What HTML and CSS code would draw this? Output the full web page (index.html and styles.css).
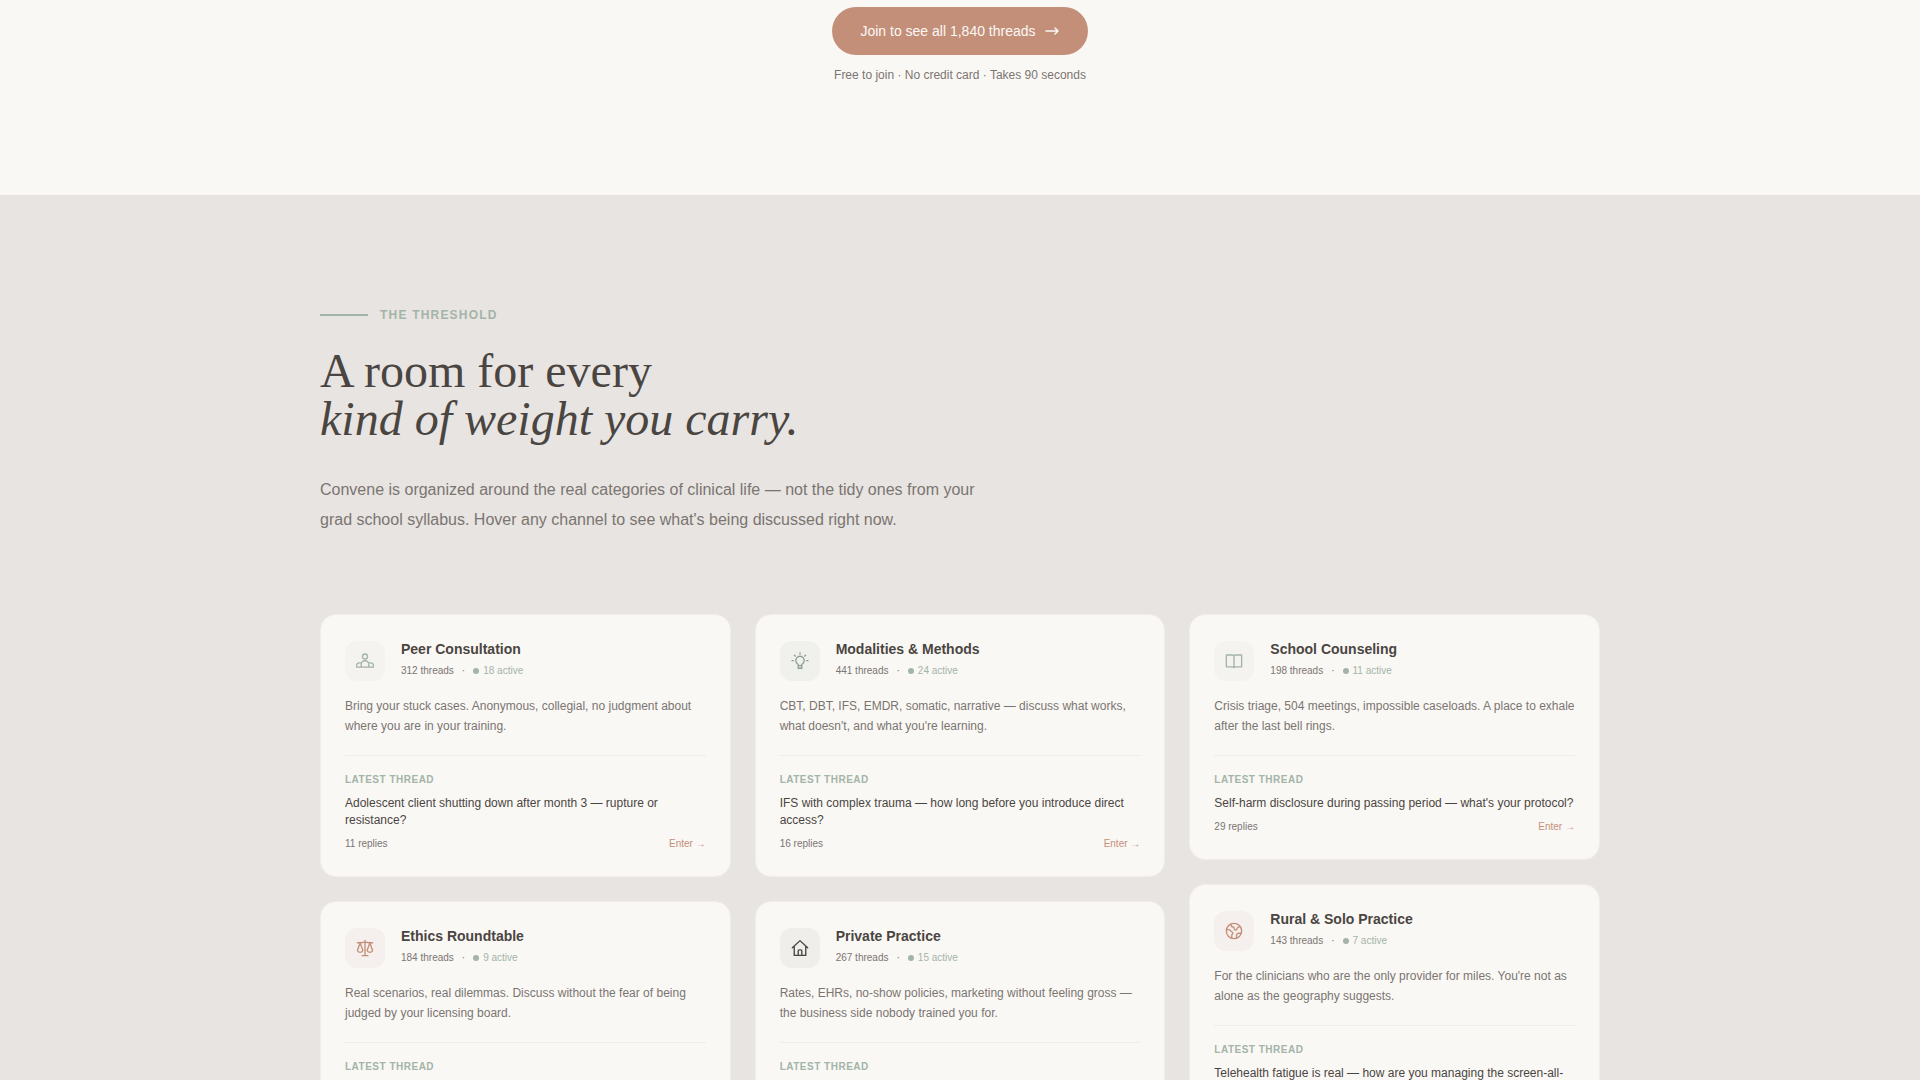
FILE: index.html
```html
<!DOCTYPE html>
<html lang="en">
<head>
    <meta charset="UTF-8">
    <meta name="viewport" content="width=device-width, initial-scale=1">
    <title>Convene</title>
    <link rel="stylesheet" href="styles.css">
</head>
<body>
<section class="join">
    <a href="#join" class="join-btn">
        Join to see all 1,840 threads
        <svg width="16" height="16" viewBox="0 0 16 16"><path d="M2 8h12M11 5l3 3-3 3"/></svg>
    </a>
    <p class="join-note">Free to join · No credit card · Takes 90 seconds</p>
</section>

<section class="threshold">
    <div class="container">
        <p class="kicker">The Threshold</p>
        <h2>A room for every<br><em>kind of weight you carry.</em></h2>
        <p class="intro">Convene is organized around the real categories of clinical life — not the tidy ones from your grad school syllabus. Hover any channel to see what's being discussed right now.</p>

        <div class="channels">
            <div class="column">
                <article class="card">
                    <header>
                        <span class="icon sage">
                            <svg viewBox="0 0 20 20"><circle cx="10" cy="5" r="2.8"/><path d="M5.800 16.800v-2.900a4.200 4.200 0 0 1 8.400 0v2.900M6 12H3.600A3 3 0 0 0 .6 15v1.800h18.800V15a3 3 0 0 0-3-3H14"/></svg>
                        </span>
                        <div>
                            <h3>Peer Consultation</h3>
                            <p class="meta">312 threads <i>·</i> <span class="active">18 active</span></p>
                        </div>
                    </header>
                    <p class="desc">Bring your stuck cases. Anonymous, collegial, no judgment about where you are in your training.</p>
                    <div class="latest">
                        <h4>Latest thread</h4>
                        <p class="thread">Adolescent client shutting down after month 3 — rupture or resistance?</p>
                        <p class="foot"><span>11 replies</span><a href="#peer">Enter →</a></p>
                    </div>
                </article>
                <article class="card cut">
                    <header>
                        <span class="icon clay">
                            <svg viewBox="0 0 20 20"><path d="M10 1.500v17M6.800 18.500h6.400M1.500 4.200h3.500L10 3.400l5 .8h3.500M4.600 4.500l-3.100 8.200c.4 1.500 1.500 2.100 3.100 2.100s2.700-.6 3.100-2.100zM15.400 4.500l-3.100 8.200c.4 1.500 1.500 2.100 3.100 2.100s2.700-.6 3.100-2.100z"/></svg>
                        </span>
                        <div>
                            <h3>Ethics Roundtable</h3>
                            <p class="meta">184 threads <i>·</i> <span class="active">9 active</span></p>
                        </div>
                    </header>
                    <p class="desc">Real scenarios, real dilemmas. Discuss without the fear of being judged by your licensing board.</p>
                    <div class="latest">
                        <h4>Latest thread</h4>
                    </div>
                </article>
            </div>

            <div class="column">
                <article class="card">
                    <header>
                        <span class="icon moss">
                            <svg viewBox="0 0 20 20"><path d="M8 15.200v-1.500a4.700 4.700 0 1 1 4 0v1.500zM8 15.200v2.800h4v-2.800M10 1v1.200M3.800 3.600l.9.900M16.200 3.600l-.9.900M1.200 9.600h1.300M17.500 9.600h1.300"/></svg>
                        </span>
                        <div>
                            <h3>Modalities &amp; Methods</h3>
                            <p class="meta">441 threads <i>·</i> <span class="active">24 active</span></p>
                        </div>
                    </header>
                    <p class="desc">CBT, DBT, IFS, EMDR, somatic, narrative — discuss what works, what doesn't, and what you're learning.</p>
                    <div class="latest">
                        <h4>Latest thread</h4>
                        <p class="thread">IFS with complex trauma — how long before you introduce direct access?</p>
                        <p class="foot"><span>16 replies</span><a href="#modalities">Enter →</a></p>
                    </div>
                </article>
                <article class="card cut">
                    <header>
                        <span class="icon dark">
                            <svg viewBox="0 0 20 20"><path d="M1.500 9.800L10 1.800l8.500 8M3.600 8.200v10h12.800v-10M8 18.200V13a1 1 0 0 1 1-1h2a1 1 0 0 1 1 1v5.200"/></svg>
                        </span>
                        <div>
                            <h3>Private Practice</h3>
                            <p class="meta">267 threads <i>·</i> <span class="active">15 active</span></p>
                        </div>
                    </header>
                    <p class="desc">Rates, EHRs, no-show policies, marketing without feeling gross — the business side nobody trained you for.</p>
                    <div class="latest">
                        <h4>Latest thread</h4>
                    </div>
                </article>
            </div>

            <div class="column">
                <article class="card">
                    <header>
                        <span class="icon sage">
                            <svg viewBox="0 0 20 20"><path d="M10 5A1.700 1.700 0 0 0 8.300 3.300H1.500v13.200h7c.8 0 1.500.3 1.500.9 0-.6.7-.9 1.500-.9h7V3.300h-6.800A1.700 1.700 0 0 0 10 5zM10 5v12.400"/></svg>
                        </span>
                        <div>
                            <h3>School Counseling</h3>
                            <p class="meta">198 threads <i>·</i> <span class="active">11 active</span></p>
                        </div>
                    </header>
                    <p class="desc">Crisis triage, 504 meetings, impossible caseloads. A place to exhale after the last bell rings.</p>
                    <div class="latest">
                        <h4>Latest thread</h4>
                        <p class="thread">Self-harm disclosure during passing period — what's your protocol?</p>
                        <p class="foot"><span>29 replies</span><a href="#school">Enter →</a></p>
                    </div>
                </article>
                <article class="card cut">
                    <header>
                        <span class="icon clay">
                            <svg viewBox="0 0 20 20"><circle cx="10" cy="10" r="8.500"/><path d="M1.600 8.500h2.900c1 0 1.200 1.200 2 1.700 1 .6 2.200.8 2.200 2.200 0 1-1.200 1.200-1.200 2.200v3.400M6.500 2.500c0 2.100 1 3 2.500 3 1.200 0 1.200 1 1.200 2s1.300 1.700 2.300 1.200c1.200-.7.8-2.200 2-2.700l2.200-.9M18.200 12.500h-2.700c-1.500 0-2.700 1-2.700 2.500V18"/></svg>
                        </span>
                        <div>
                            <h3>Rural &amp; Solo Practice</h3>
                            <p class="meta">143 threads <i>·</i> <span class="active">7 active</span></p>
                        </div>
                    </header>
                    <p class="desc">For the clinicians who are the only provider for miles. You're not as alone as the geography suggests.</p>
                    <div class="latest">
                        <h4>Latest thread</h4>
                        <p class="thread">Telehealth fatigue is real — how are you managing the screen-all-</p>
                    </div>
                </article>
            </div>
        </div>
    </div>
</section>
</body>
</html>
```
FILE: styles.css
```css
* {
    margin: 0;
    padding: 0;
    box-sizing: border-box;
}

body {
    background: #faf8f5;
    color: #4a4541;
    font-family: "Liberation Sans", Arial, sans-serif;
    font-size: 12px;
    line-height: 16px;
}

a {
    text-decoration: none;
}

svg {
    display: block;
    fill: none;
    stroke: currentColor;
    stroke-width: 1.5;
    stroke-linecap: round;
    stroke-linejoin: round;
}

/* join */
.join {
    display: flex;
    flex-direction: column;
    align-items: center;
    gap: 12px;
    padding: 7px 24px 112px;
}

.join-btn {
    display: flex;
    align-items: center;
    gap: 8px;
    padding: 14px 28px;
    border-radius: 24px;
    background: #c48f79;
    color: #faf8f5;
    font-size: 14px;
    line-height: 20px;
}

.join-note {
    color: #7a7571;
}

/* threshold */
.threshold {
    padding: 112px 24px;
    background: #e8e4e1;
}

.container {
    max-width: 1280px;
    margin: 0 auto;
}

.kicker {
    display: flex;
    align-items: center;
    gap: 12px;
    color: #a3b4a8;
    font-weight: bold;
    letter-spacing: 0.1em;
    text-transform: uppercase;
}

.kicker::before {
    content: "";
    width: 48px;
    height: 2px;
    background: #a3b4a8;
}

h2 {
    margin-top: 24px;
    font-family: "Liberation Serif", "Times New Roman", serif;
    font-size: 48px;
    font-weight: normal;
    line-height: 48px;
}

.intro {
    max-width: 672px;
    margin: 32px 0 79px;
    color: #7a7571;
    font-size: 16px;
    line-height: 30px;
}

/* cards */
.channels {
    display: grid;
    grid-template-columns: repeat(3, 1fr);
    gap: 24px;
}

.column {
    display: flex;
    flex-direction: column;
    gap: 24px;
}

.card {
    padding: 24px;
    border: 1px solid #f0edea;
    border-radius: 16px;
    background: #faf8f5;
}

.cut {
    min-height: 262px;
}

.card header {
    display: flex;
    gap: 16px;
}

.icon {
    display: flex;
    align-items: center;
    justify-content: center;
    width: 40px;
    height: 40px;
    margin-top: 2px;
    border-radius: 12px;
}

.icon svg {
    width: 18px;
    height: 18px;
}

.sage {
    background: #f4f3f0;
    color: #a3b4a8;
}

.moss {
    background: #f0f1ec;
    color: #8e9f91;
}

.clay {
    background: #f5f0ed;
    color: #c48f79;
}

.dark {
    background: #f0eeeb;
    color: #4a4541;
}

h3 {
    font-size: 14px;
    line-height: 20px;
}

.meta {
    display: flex;
    align-items: center;
    gap: 8px;
    margin-top: 4px;
    color: #7a7571;
    font-size: 10px;
}

.active {
    display: flex;
    align-items: center;
    gap: 4px;
    color: #a3b4a8;
}

.active::before {
    content: "";
    width: 6px;
    height: 6px;
    border-radius: 50%;
    background: #a3b4a8;
}

.desc {
    margin: 15px 0 19px;
    color: #7a7571;
    line-height: 20px;
}

.latest {
    padding-top: 16px;
    border-top: 1px solid #efedea;
}

h4 {
    color: #a3b4a8;
    font-size: 10px;
    letter-spacing: 0.05em;
    text-transform: uppercase;
}

.thread {
    margin: 7px 0;
    line-height: 17px;
}

.foot {
    display: flex;
    justify-content: space-between;
    color: #7a7571;
    font-size: 10px;
}

.foot a {
    color: #c48f79;
}
```
